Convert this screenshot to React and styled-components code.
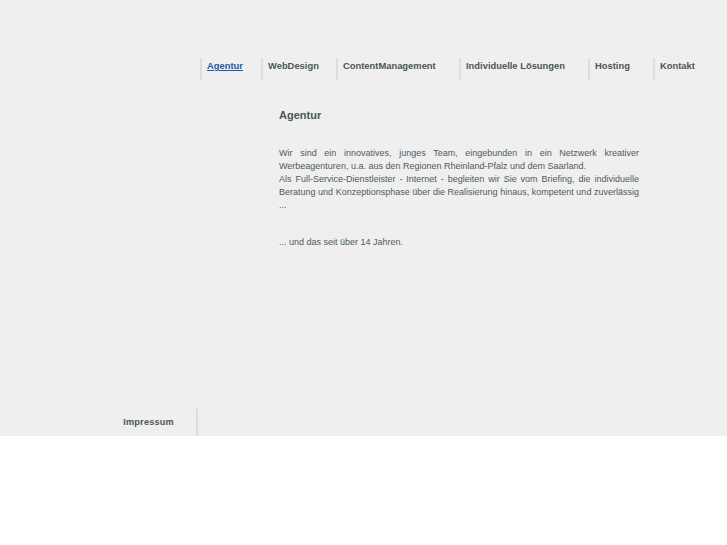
import React from "react";
import styled, { createGlobalStyle } from "styled-components";

const GlobalStyle = createGlobalStyle`
  html, body {
    margin: 0;
    padding: 0;
    background: #ffffff;
  }
  body {
    font-family: "Liberation Sans", Arial, sans-serif;
  }
`;

const Page = styled.div`
  background: #efefef;
  height: 436px;
  display: flex;
  flex-direction: column;
`;

const Nav = styled.ul`
  display: flex;
  list-style: none;
  margin: 58px 0 0 200px;
  padding: 0;
  height: 22px;
`;

const NavItem = styled.li`
  width: ${props => props.width}px;
  box-sizing: border-box;
  border-left: 2px solid #dedede;
  padding: 0 0 0 5px;
  line-height: 12px;
`;

const NavLink = styled.a`
  font-size: 9.4px;
  font-weight: bold;
  color: ${props => (props.active ? "#1c5aa6" : "#4b5657")};
  text-decoration: ${props => (props.active ? "underline" : "none")};
`;

const Content = styled.main`
  margin: 21px 0 0 279px;
  width: 360px;
  color: #505a5b;
  flex: 1;
`;

const Heading = styled.h1`
  font-size: 11px;
  font-weight: bold;
  margin: 0 0 18px;
  line-height: 28px;
  color: #4b5657;
`;

const Text = styled.p`
  font-size: 9px;
  line-height: 13px;
  text-align: justify;
  margin: 0 0 ${props => props.gap || 0}px;
`;

const Footer = styled.footer`
  display: flex;
  height: 27px;
`;

const FooterCell = styled.div`
  width: 198px;
  box-sizing: border-box;
  text-align: right;
  padding: 2px 22px 0 0;
  border-right: 2px solid #dedede;
`;

const FooterLink = styled.a`
  font-size: 9.2px;
  font-weight: bold;
  color: #4b5657;
  letter-spacing: 0.2px;
`;

const items = [
  { label: "Agentur", width: 61, active: true },
  { label: "WebDesign", width: 75 },
  { label: "ContentManagement", width: 123 },
  { label: "Individuelle Lösungen", width: 129 },
  { label: "Hosting", width: 65 },
  { label: "Kontakt", width: 74 }
];

export default function App() {
  return (
    <>
      <GlobalStyle />
      <Page>
        <Nav>
          {items.map(item => (
            <NavItem key={item.label} width={item.width}>
              <NavLink active={item.active}>{item.label}</NavLink>
            </NavItem>
          ))}
        </Nav>
        <Content>
          <Heading>Agentur</Heading>
          <Text>
            Wir sind ein innovatives, junges Team, eingebunden in ein Netzwerk
            kreativer Werbeagenturen, u.a. aus den Regionen Rheinland-Pfalz und
            dem Saarland.
          </Text>
          <Text gap={24}>
            Als Full-Service-Dienstleister - Internet - begleiten wir Sie vom
            Briefing, die individuelle Beratung und Konzeptionsphase über die
            Realisierung hinaus, kompetent und zuverlässig ...
          </Text>
          <Text>... und das seit über 14 Jahren.</Text>
        </Content>
        <Footer>
          <FooterCell>
            <FooterLink>Impressum</FooterLink>
          </FooterCell>
        </Footer>
      </Page>
    </>
  );
}
